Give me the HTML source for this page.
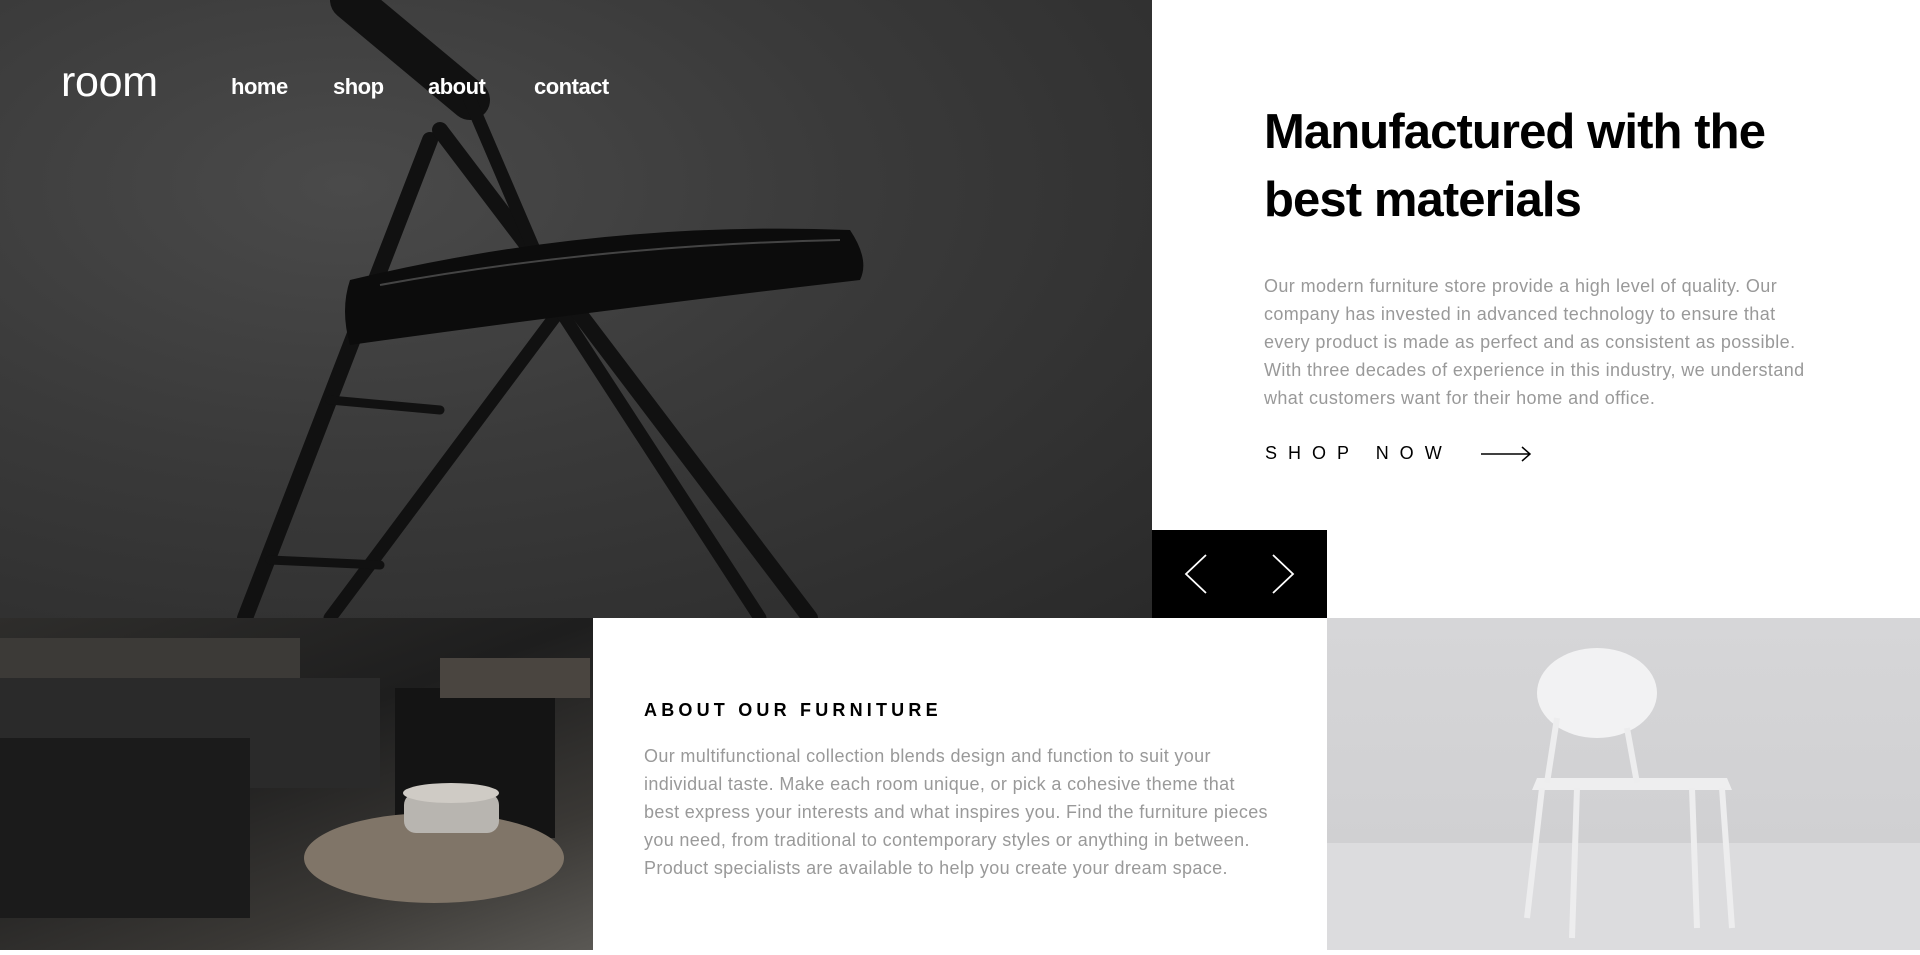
<!DOCTYPE html>
<html><head><meta charset="utf-8"><style>
*{margin:0;padding:0;box-sizing:border-box}
body{width:1920px;height:950px;overflow:hidden;background:#fff;font-family:"Liberation Sans",sans-serif;position:relative}
.hero{position:absolute;left:0;top:0;width:1152px;height:618px;background:radial-gradient(ellipse at 30% 30%,#4a4a4a 0%,#3a3a3a 45%,#2a2a2a 100%)}
.logo{position:absolute;left:61px;top:58px;color:#fff;font-size:43px;letter-spacing:-0.3px}
.nav a{position:absolute;top:74px;color:#fff;font-size:22px;font-weight:bold;text-decoration:none;letter-spacing:-0.5px}
h1{position:absolute;left:1264px;top:98px;font-size:49px;line-height:68px;letter-spacing:-0.9px;font-weight:bold;color:#000}
.p1{position:absolute;left:1264px;top:272px;width:640px;font-size:18px;letter-spacing:0.4px;line-height:28px;color:#999;white-space:nowrap}
.shop{position:absolute;left:1265px;top:443px;font-size:18px;letter-spacing:11px;color:#000}
.arrows{position:absolute;left:1152px;top:530px;width:175px;height:88px;background:#000}
.bl{position:absolute;left:0;top:618px;width:593px;height:332px;background:linear-gradient(160deg,#2e2d2b 0%,#1e1e1e 40%,#3a3835 75%,#5a5854 100%)}
.bm{position:absolute;left:593px;top:618px;width:734px;height:332px;background:#fff}
.br{position:absolute;left:1327px;top:618px;width:593px;height:332px;background:linear-gradient(180deg,#d6d6d8 0%,#d0d0d2 70%,#e2e2e4 100%)}
h2{position:absolute;left:644px;top:700px;font-size:18px;letter-spacing:4.2px;font-weight:bold;color:#000}
.p2{position:absolute;left:644px;top:742px;width:680px;font-size:18px;letter-spacing:0.35px;line-height:28px;color:#999;white-space:nowrap}
</style></head><body>
<div class="hero">
<svg width="1152" height="618" style="position:absolute;left:0;top:0">
<g fill="none" stroke="#111" stroke-linecap="round">
<path d="M350 0 L470 100" stroke-width="40"/>
<path d="M430 140 L245 618" stroke-width="16"/>
<path d="M440 130 L810 618" stroke-width="16"/>
<path d="M470 100 L560 310 L330 618" stroke-width="13"/>
<path d="M560 310 L760 618" stroke-width="13"/>
<path d="M330 400 L440 410" stroke-width="9"/>
<path d="M270 560 L380 565" stroke-width="9"/>
</g>
<path d="M350 280 Q600 220 850 230 Q870 260 860 280 Q600 310 350 345 Q340 310 350 280Z" fill="#0c0c0c"/>
<path d="M380 285 Q600 245 840 240" stroke="#444" stroke-width="2" fill="none"/>
</svg>
<div class="logo">room</div>
<div class="nav"><a style="left:231px">home</a><a style="left:333px">shop</a><a style="left:428px">about</a><a style="left:534px">contact</a></div>
</div>
<h1>Manufactured with the<br>best materials</h1>
<p class="p1">Our modern furniture store provide a high level of quality. Our<br>company has invested in advanced technology to ensure that<br>every product is made as perfect and as consistent as possible.<br>With three decades of experience in this industry, we understand<br>what customers want for their home and office.</p>
<div class="shop">SHOP NOW</div>
<svg style="position:absolute;left:1480px;top:445px" width="52" height="18"><path d="M1 9 H50 M42 2 L50 9 L42 16" stroke="#000" stroke-width="1.5" fill="none"/></svg>
<div class="arrows"><svg width="175" height="88"><path d="M54 25 L34 44 L54 63 M121 25 L141 44 L121 63" stroke="#fff" stroke-width="1.8" fill="none"/></svg></div>
<div class="bl"><svg width="593" height="332">
<rect x="0" y="20" width="300" height="60" fill="#3c3a37"/>
<rect x="0" y="60" width="380" height="110" fill="#2a2a2a"/>
<rect x="0" y="120" width="250" height="180" fill="#1b1b1b"/>
<rect x="395" y="70" width="160" height="150" fill="#141414"/>
<rect x="440" y="40" width="150" height="40" fill="#4a4540"/>
<ellipse cx="434" cy="240" rx="130" ry="45" fill="#807568"/>
<rect x="404" y="175" width="95" height="40" rx="12" fill="#b8b5b0"/>
<ellipse cx="451" cy="175" rx="48" ry="10" fill="#cfcbc5"/>
</svg></div>
<div class="bm"></div>
<h2>ABOUT OUR FURNITURE</h2>
<p class="p2">Our multifunctional collection blends design and function to suit your<br>individual taste. Make each room unique, or pick a cohesive theme that<br>best express your interests and what inspires you. Find the furniture pieces<br>you need, from traditional to contemporary styles or anything in between.<br>Product specialists are available to help you create your dream space.</p>
<div class="br"><svg width="593" height="332">
<rect x="0" y="225" width="593" height="107" fill="#dcdcde"/>
<ellipse cx="270" cy="75" rx="60" ry="45" fill="#f2f2f3"/>
<path d="M210 160 H400 L405 172 H205Z" fill="#eeeeef"/>
<g stroke="#ededee" stroke-width="6"><path d="M215 170 L200 300 M395 170 L405 310 M250 170 L245 320 M365 170 L370 310 M230 100 L220 165 M300 110 L310 165"/></g>
</svg></div>
</body></html>
